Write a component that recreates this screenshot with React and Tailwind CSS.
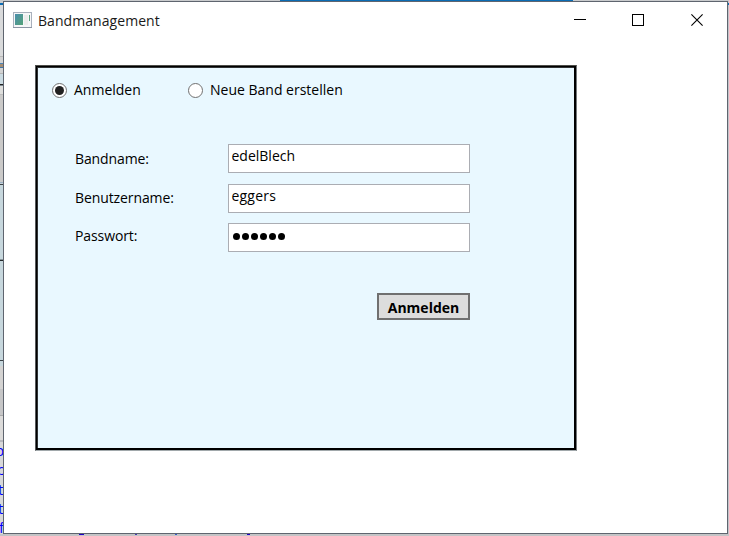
import React from "react";

// Slivers of the application lying behind the dialog, from top to bottom.
const backdrop = [
  "h-[2px] bg-[#c9cbcd]",
  "h-[2px] bg-[#0a6cb4]",
  "h-[51px] bg-[#d9dadb]",
  "h-px bg-[#b8b8b8]",
  "h-[6px] bg-[#d3d3d3]",
  "h-px bg-[#4b84b8]",
  "h-[3px] bg-[#a58d74]",
  "h-px bg-[#3f78ad]",
  "h-[5px] bg-[#d3d3d3]",
  "h-px bg-[#b5b5b5]",
  "h-[10px] bg-[#cbdbe2]",
  "h-px bg-[#222222]",
  "h-px bg-[#7b8790]",
  "h-[8px] bg-[#dededc]",
  "h-px bg-[#bcbcbc]",
  "h-[87px] bg-[#cbcac9]",
  "h-px bg-[#9fb2c4]",
  "h-px bg-[#c5d3da]",
  "h-px bg-[#3c4246]",
  "h-[74px] bg-[#c7d7dd]",
  "h-px bg-[#8b979c]",
  "h-px bg-[#24282a]",
  "h-[99px] bg-[#c7d7dd]",
  "h-px bg-[#3c4246]",
  "h-[5px] bg-[#c7d7dd]",
  "h-[23px] bg-[#d4d3d2]",
  "h-[26px] bg-[#c6c6c7]",
  "h-px bg-[#a9a9a9]",
  "h-[24px] bg-[#dcdbda]",
  "h-[2px] bg-[#b6b7bd]",
];

const codeLetters = [
  { letter: "p", shift: "-ml-[5px]" },
  { letter: "c", shift: "-ml-[3px]" },
  { letter: "t", shift: "-ml-[2px]" },
  { letter: "t", shift: "-ml-[2px]" },
  { letter: "f", shift: "-ml-px" },
];

function Radio({ checked, label, width }) {
  return (
    <label className="flex items-center">
      <span className="flex size-[15px] items-center justify-center rounded-full border border-[#707070] bg-white">
        {checked && <span className="size-[9px] rounded-full bg-[#212121]" />}
      </span>
      <span className={`ml-[7px] ${width} leading-5`}>{label}</span>
    </label>
  );
}

function Field({ label, labelClass, children }) {
  return (
    <div className="flex h-[29px]">
      <span className={`w-[153px] leading-5 ${labelClass}`}>{label}</span>
      <div className="w-[242px] border border-[#abadb3] bg-white pl-[2.5px] leading-5">
        {children}
      </div>
    </div>
  );
}

function TitleBar() {
  return (
    <div className="flex h-[37px] items-center pl-[9px] text-[#1a1a1a]">
      <svg width="19" height="16" viewBox="0 0 19 16" shapeRendering="crispEdges" className="-mt-px">
        <defs>
          <linearGradient id="preview" x1="0" y1="0" x2="1" y2="1">
            <stop offset="0" stopColor="#4b8fae" />
            <stop offset="1" stopColor="#55a277" />
          </linearGradient>
        </defs>
        <rect x="0" y="0" width="19" height="16" fill="#a9b1bd" />
        <rect x="1" y="1" width="17" height="14" fill="#f6f7f8" />
        <rect x="2" y="2" width="8" height="11" fill="url(#preview)" />
        <rect x="11" y="3" width="4" height="10" fill="#ececec" />
        <rect x="16" y="3" width="1" height="6" fill="#5ba180" />
        <rect x="0" y="15" width="19" height="1" fill="#8c95a4" />
      </svg>
      <span className="ml-[6px] flex-1 tracking-[0.06px] leading-5">Bandmanagement</span>
      <svg width="130" height="12" viewBox="0 0 130 12" className="-mt-px mr-[23px]" fill="none" stroke="#000">
        <path d="M0 5.5H12M58.5 .5H69.5V11.5H58.5Z" shapeRendering="crispEdges" />
        <path d="M117.4 .4L128.6 11.6M128.6 .4L117.4 11.6" strokeWidth="1.1" />
      </svg>
    </div>
  );
}

export default function App() {
  return (
    <div className="flex h-[536px] w-[729px] flex-col overflow-hidden bg-[#c9cbcd] font-['Open_Sans','Noto_Sans',sans-serif] text-[14px] text-black">
      <div className="flex h-px">
        <div className="w-[280px] bg-[#c9cbcd]" />
        <div className="w-[293px] bg-[#0a6cb4]" />
      </div>
      <div className="flex h-[533px]">
        <div className="w-[3px] overflow-hidden bg-[#d8d8d8]">
          {backdrop.map((tone, i) => (
            <div key={i} className={tone} />
          ))}
          <div className="-mt-px text-[15px] leading-[19.3px] text-[#0000ff]">
            {codeLetters.map(({ letter, shift }, i) => (
              <div key={i} className={shift}>{letter}</div>
            ))}
          </div>
        </div>
        <div className="w-[725px] border border-[#5f656f] bg-white">
          <TitleBar />
          <div className="ml-[31px] mt-[26px] h-[386px] w-[542px] border border-b-[#a1a8ab] border-l-[#55585a] border-r-[#74787a] border-t-[#4c4d48]">
            <div className="h-full border-2 border-l border-t border-black">
              <div className="h-full border-l border-t border-l-[#303233] border-t-[#303233] bg-[#e9f8ff]">
                <div className="flex pl-[14px] pt-[12px]">
                  <Radio checked label="Anmelden" width="w-[114px]" />
                  <Radio label="Neue Band erstellen" width="w-[150px]" />
                </div>
                <div className="ml-[37px] mt-[44px] w-[395px]">
                  <Field label="Bandname:" labelClass="pt-[5px] tracking-[-0.1px]">
                    <span className="block pt-px">edelBlech</span>
                  </Field>
                  <div className="h-[11px]" />
                  <Field label="Benutzername:" labelClass="pt-[4px] tracking-[-0.1px]">
                    <span className="block pt-px tracking-[0.2px]">eggers</span>
                  </Field>
                  <div className="h-[10px]" />
                  <Field label="Passwort:" labelClass="pt-[3px] tracking-[-0.1px]">
                    <span className="flex gap-[2.1px] pl-[1.5px] pt-[8.5px]">
                      {[0, 1, 2, 3, 4, 5].map((dot) => (
                        <span key={dot} className="size-[7px] rounded-full bg-black" />
                      ))}
                    </span>
                  </Field>
                  <div className="mt-[41px] flex justify-end">
                    <button className="flex h-[27px] w-[93px] items-center justify-center border-2 border-[#707070] bg-[#dddddd] pt-[2px] font-bold leading-5">
                      Anmelden
                    </button>
                  </div>
                </div>
              </div>
            </div>
          </div>
        </div>
        <div className="w-px bg-[#c3c5ca]">
          <div className="mt-[2px] h-[2px] bg-[#0a6cb4]" />
        </div>
      </div>
      <div className="flex h-[2px] bg-[#c4c4c6]">
        <div className="ml-[79px] h-px w-[5px] bg-[#2100c8]" />
        <div className="ml-[51px] h-px w-[2px] bg-[#4a3cae]" />
        <div className="ml-[38px] h-px w-[2px] bg-[#3b5cc8]" />
        <div className="ml-[70px] h-px w-[3px] bg-[#2100c8]" />
      </div>
    </div>
  );
}
